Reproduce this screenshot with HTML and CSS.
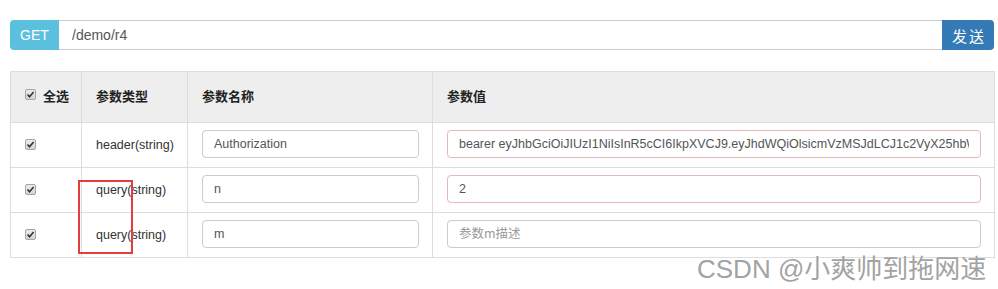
FILE: index.html
```html
<!DOCTYPE html>
<html lang="zh">
<head>
<meta charset="utf-8">
<link rel="stylesheet" href="styles.css">
</head>
<body>
<div class="page">
  <div class="urlbar">
    <span class="method">GET</span>
    <input class="url" type="text" value="/demo/r4">
    <button class="send">发送</button>
  </div>
  <table class="params">
    <colgroup>
      <col class="c1"><col class="c2"><col class="c3"><col class="c4">
    </colgroup>
    <thead>
      <tr>
        <th class="chk-cell"><span class="chk"><svg viewBox="0 0 11 11" width="11" height="11"><path d="M2.5 5.5 L4.5 7.8 L8.6 3" fill="none" stroke="#333" stroke-width="1.6"/></svg></span><span class="all">全选</span></th>
        <th>参数类型</th>
        <th>参数名称</th>
        <th>参数值</th>
      </tr>
    </thead>
    <tbody>
      <tr>
        <td class="chk-cell"><span class="chk"><svg viewBox="0 0 11 11" width="11" height="11"><path d="M2.5 5.5 L4.5 7.8 L8.6 3" fill="none" stroke="#333" stroke-width="1.6"/></svg></span></td>
        <td>header(string)</td>
        <td><input class="field" type="text" value="Authorization"></td>
        <td><input class="field warn" type="text" value="bearer eyJhbGciOiJIUzI1NiIsInR5cCI6IkpXVCJ9.eyJhdWQiOlsicmVzMSJdLCJ1c2VyX25hbWUiOiJ6aGFuZ3NhbiJ9"></td>
      </tr>
      <tr>
        <td class="chk-cell"><span class="chk"><svg viewBox="0 0 11 11" width="11" height="11"><path d="M2.5 5.5 L4.5 7.8 L8.6 3" fill="none" stroke="#333" stroke-width="1.6"/></svg></span></td>
        <td>query(string)</td>
        <td><input class="field" type="text" value="n"></td>
        <td><input class="field warn" type="text" value="2"></td>
      </tr>
      <tr>
        <td class="chk-cell"><span class="chk"><svg viewBox="0 0 11 11" width="11" height="11"><path d="M2.5 5.5 L4.5 7.8 L8.6 3" fill="none" stroke="#333" stroke-width="1.6"/></svg></span></td>
        <td>query(string)</td>
        <td><input class="field" type="text" value="m"></td>
        <td><input class="field" type="text" placeholder="参数m描述"></td>
      </tr>
    </tbody>
  </table>
  <div class="mark-box"></div>
  <div class="watermark">CSDN @小爽帅到拖网速</div>
</div>
</body>
</html>
```
FILE: styles.css
```css
* { box-sizing: border-box; }
html, body {
  margin: 0;
  padding: 0;
  background: #fff;
}
body {
  font-family: "Liberation Sans", "Noto Sans CJK SC", sans-serif;
  font-size: 13px;
  color: #333;
}
.page {
  position: relative;
  width: 998px;
  height: 289px;
  padding: 20px 4px 0 10px;
}
.urlbar {
  display: flex;
  height: 30px;
}
.method {
  width: 49px;
  background: #5bc0de;
  color: #fff;
  font-size: 14px;
  display: flex;
  align-items: center;
  justify-content: center;
  border-radius: 4px 0 0 4px;
}
.url {
  flex: 1;
  height: 30px;
  border: 1px solid #ccc;
  border-left: 0;
  border-right: 0;
  padding: 0 13px;
  font-family: inherit;
  font-size: 14px;
  color: #555;
  outline: none;
  margin: 0;
}
.send {
  width: 52px;
  height: 30px;
  margin: 0;
  border: 0;
  background: #337ab7;
  color: #fff;
  font-family: "Noto Sans CJK SC", sans-serif;
  font-size: 15px;
  letter-spacing: 2px;
  border-radius: 0 4px 4px 0;
  padding: 0 0 0 2px;
}
.params {
  margin-top: 21px;
  width: 984px;
  border-collapse: collapse;
  table-layout: fixed;
  border: 1px solid #ddd;
}
.c1 { width: 71px; }
.c2 { width: 106px; }
.c3 { width: 245px; }
.c4 { width: 562px; }
.params th,
.params td {
  border: 1px solid #ddd;
  text-align: left;
  padding: 0 13px 0 14px;
  vertical-align: middle;
}
.params th {
  height: 51px;
  padding-bottom: 4px;
  background: #eee;
  font-weight: bold;
  font-size: 13px;
  color: #222;
  font-family: "Noto Sans CJK SC", sans-serif;
}
.params td {
  height: 45px;
  font-size: 12.5px;
  color: #333;
}
.params th.chk-cell,
.params td.chk-cell {
  padding-left: 14px;
  padding-right: 0;
}
.chk {
  display: inline-block;
  width: 11px;
  height: 11px;
  border: 1px solid #a6a6a6;
  border-radius: 2px;
  background: linear-gradient(#ececec, #d4d4d4);
  vertical-align: middle;
  position: relative;
  top: -1px;
}
.chk svg {
  display: block;
  margin: -1px 0 0 -1px;
}
.all {
  margin-left: 7px;
  font-size: 13px;
  vertical-align: middle;
}
.field {
  display: block;
  width: 100%;
  height: 28px;
  border: 1px solid #ccc;
  border-radius: 4px;
  padding: 0 11px;
  font-family: "Liberation Sans", "Noto Sans CJK SC", sans-serif;
  font-size: 12.5px;
  color: #555;
  outline: none;
  background: #fff;
  position: relative;
  top: -1px;
}
.field.warn {
  border-color: #e8b7b7;
}
.field::placeholder {
  color: #999;
  font-family: "Noto Sans CJK SC", sans-serif;
}
.mark-box {
  position: absolute;
  left: 78px;
  top: 180px;
  width: 55px;
  height: 74px;
  border: 2px solid #e53c3c;
}
.watermark {
  position: absolute;
  left: 697px;
  top: 254px;
  font-family: "Liberation Sans", "Noto Sans CJK SC", sans-serif;
  font-size: 26px;
  line-height: 30px;
  color: #a3a3a3;
  text-shadow: 0 0 1px #fff;
  white-space: nowrap;
}
```
